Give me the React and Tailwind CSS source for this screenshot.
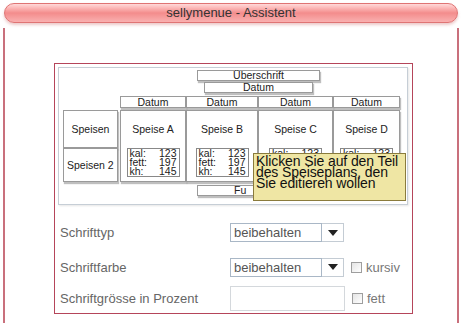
const font = { fontFamily: '"Liberation Sans", Arial, sans-serif' };

function Box({ className = "", children }) {
  return (
    <div
      className={
        "border border-[#9a9a9a] bg-white shadow-[1px_2px_1px_rgba(0,0,0,0.25)] flex items-center justify-center text-[10.5px] leading-none text-[#222] " +
        className
      }
    >
      {children}
    </div>
  );
}

function Naehrwerte({ full }) {
  return (
    <div className="w-[53px] h-[29px] border border-[#888] bg-white px-[2px] text-[10.5px] leading-[9px] text-[#222]">
      <div className="flex justify-between"><span>kal:</span><span>123</span></div>
      {full && (
        <>
          <div className="flex justify-between"><span>fett:</span><span>197</span></div>
          <div className="flex justify-between"><span>kh:</span><span>145</span></div>
        </>
      )}
    </div>
  );
}

function SpeiseSpalte({ name, width, full = true }) {
  return (
    <div
      className={"h-[72px] border border-[#9a9a9a] bg-white shadow-[1px_2px_1px_rgba(0,0,0,0.25)] flex flex-col items-center " + width}
    >
      <div className="h-[37px] flex items-center text-[10.5px] text-[#222]">{name}</div>
      <Naehrwerte full={full} />
    </div>
  );
}

function Vorschau() {
  return (
    <div className="relative ml-[3px] mt-[3px] w-[350px] h-[138px] border border-[#c6ced6] bg-white shadow-[1px_1px_2px_rgba(0,0,0,0.1)] overflow-hidden">
      <div className="flex flex-col">
        <Box className="ml-[138px] mt-[2px] w-[123px] h-[11px]">Überschrift</Box>
        <Box className="ml-[145px] mt-[1px] w-[109px] h-[11px]">Datum</Box>
        <div className="ml-[61px] mt-[3px] flex">
          <Box className="w-[66px] h-[12px]">Datum</Box>
          <Box className="w-[72px] h-[12px]">Datum</Box>
          <Box className="w-[75px] h-[12px]">Datum</Box>
          <Box className="w-[67px] h-[12px]">Datum</Box>
        </div>
        <div className="mt-[2px] flex">
          <div className="ml-[4px] w-[55px] flex flex-col">
            <Box className="h-[38px]">Speisen</Box>
            <Box className="h-[34px] justify-start pl-[3px] overflow-hidden whitespace-nowrap">Speisen 2</Box>
          </div>
          <div className="ml-[2px] flex">
            <SpeiseSpalte name="Speise A" width="w-[66px]" />
            <SpeiseSpalte name="Speise B" width="w-[72px]" />
            <SpeiseSpalte name="Speise C" width="w-[75px]" full={false} />
            <SpeiseSpalte name="Speise D" width="w-[67px]" full={false} />
          </div>
        </div>
        <Box className="ml-[138px] mt-[3px] w-[123px] h-[11px] justify-start pl-[36px]">Fu</Box>
      </div>
      <div className="absolute left-[194px] top-[85px] w-[153px] h-[48px] border border-[#8a7b3c] bg-[#efe6a4] px-[2px] pt-[2px] text-[14px] leading-[11px] text-[#111] tracking-[-0.1px] whitespace-nowrap">
        Klicken Sie auf den Teil
        <br />
        des Speiseplans, den
        <br />
        Sie editieren wollen
      </div>
    </div>
  );
}

function Auswahl() {
  return (
    <div className="flex">
      <div className="w-[92px] h-[19px] border border-[#a9b7c6] bg-white pl-[3px] flex items-center text-[13px] text-[#555]">
        beibehalten
      </div>
      <div className="w-[22px] h-[19px] border border-l-0 border-[#c4ccd4] bg-white flex items-center justify-center">
        <svg width="10" height="6" viewBox="0 0 10 6">
          <path d="M0 0 L10 0 L5 6 Z" fill="#222" />
        </svg>
      </div>
    </div>
  );
}

function Haken({ label }) {
  return (
    <div className="ml-[7px] flex items-center gap-[4px]">
      <div className="w-[11px] h-[11px] border border-[#9e9e9e] bg-gradient-to-br from-[#e4e4e4] to-white" />
      <span className="text-[13px] text-[#777]">{label}</span>
    </div>
  );
}

export default function App() {
  return (
    <div className="w-[462px] h-[323px] bg-white overflow-hidden" style={font}>
      <div className="mx-[4px] mt-[3px] h-[20px] rounded-full border border-[#df7474] bg-gradient-to-b from-[#ffd9d9] via-[#f38c8c] to-[#f9b0b0] shadow-[0_2px_3px_rgba(200,100,100,0.35)] flex items-center justify-center text-[13px] text-[#333]">
        sellymenue - Assistent
      </div>
      <div className="mt-[5px] ml-[3px] w-[456px] h-[300px] border-x-2 border-[#c9707c] pt-[35px]">
        <div className="ml-[49px] w-[359px] h-[251px] border border-[#b5455a] flex flex-col">
          <Vorschau />
          <div className="mt-[18px] flex items-center">
            <span className="ml-[5px] w-[170px] text-[13px] text-[#666]">Schrifttyp</span>
            <Auswahl />
          </div>
          <div className="mt-[15px] flex items-center">
            <span className="ml-[5px] w-[170px] text-[13px] text-[#666]">Schriftfarbe</span>
            <Auswahl />
            <Haken label="kursiv" />
          </div>
          <div className="mt-[9px] flex items-center">
            <span className="ml-[5px] w-[170px] text-[13px] text-[#666]">Schriftgrösse in Prozent</span>
            <div className="w-[115px] h-[25px] border border-[#d4d8dc] bg-white" />
            <Haken label="fett" />
          </div>
        </div>
      </div>
    </div>
  );
}
